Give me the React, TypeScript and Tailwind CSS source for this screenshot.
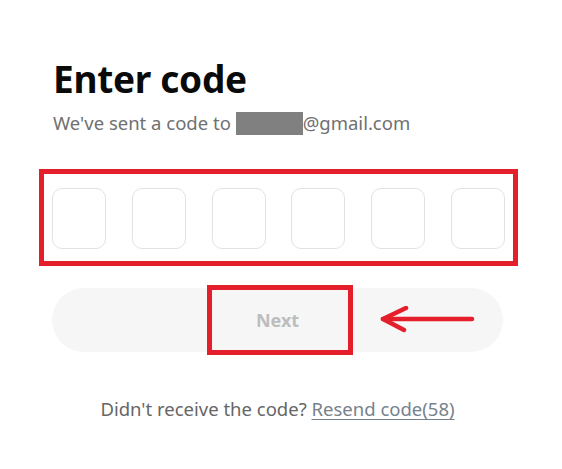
import React from "react";

export default function App() {
  return (
    <div className="w-[562px] h-[469px] bg-white overflow-hidden" style={{ fontFamily: "'Noto Sans', Lato, sans-serif" }}>
      <div className="pt-[56px] pl-[39px] pr-[44px]">
        <div className="pl-[14px]">
          <h1 className="text-[37px] leading-[46px] font-bold text-[#0a0a0a] tracking-[-0.3px]">Enter code</h1>
          <p className="mt-[8px] text-[18.5px] leading-[26px] text-[#707070] flex items-center">
            <span>We've sent a code to&nbsp;</span>
            <span className="inline-block w-[67px] h-[23px] bg-[#808080]"></span>
            <span>@gmail.com</span>
          </p>
        </div>
        <div className="mt-[33px] border-[5px] border-[#e41e2a] pt-[14px] pb-[12px] pl-[8px] pr-[8px] flex justify-between">
          {[0, 1, 2, 3, 4, 5].map((i) => (
            <div key={i} className="w-[54px] h-[61px] rounded-[10px] border border-[#e2e2e2] bg-white" />
          ))}
        </div>
        <div className="relative mt-[22px] ml-[13px] w-[451px] h-[64px] rounded-full bg-[#f6f6f6] flex items-center justify-center">
          <span className="text-[18px] font-bold text-[#bdbdbd]">Next</span>
          <div className="absolute left-[155px] top-[-3px] w-[146px] h-[70px] border-[5px] border-[#e41e2a]" />
          <svg className="absolute left-[328px] top-[18px]" width="95" height="30" viewBox="0 0 95 30">
            <path d="M3 13 L92 13" stroke="#e41e2a" strokeWidth="4.5" strokeLinecap="round" fill="none" />
            <path d="M26 2 L3 13 L24 24" stroke="#e41e2a" strokeWidth="4.5" strokeLinecap="round" strokeLinejoin="round" fill="none" />
          </svg>
        </div>
        <p className="mt-[44px] ml-[13px] w-[451px] text-center text-[18.5px] leading-[26px] text-[#666]">
          Didn't receive the code?{" "}
          <span className="text-[#76828c] underline underline-offset-[3px]">Resend code(58)</span>
        </p>
      </div>
    </div>
  );
}
